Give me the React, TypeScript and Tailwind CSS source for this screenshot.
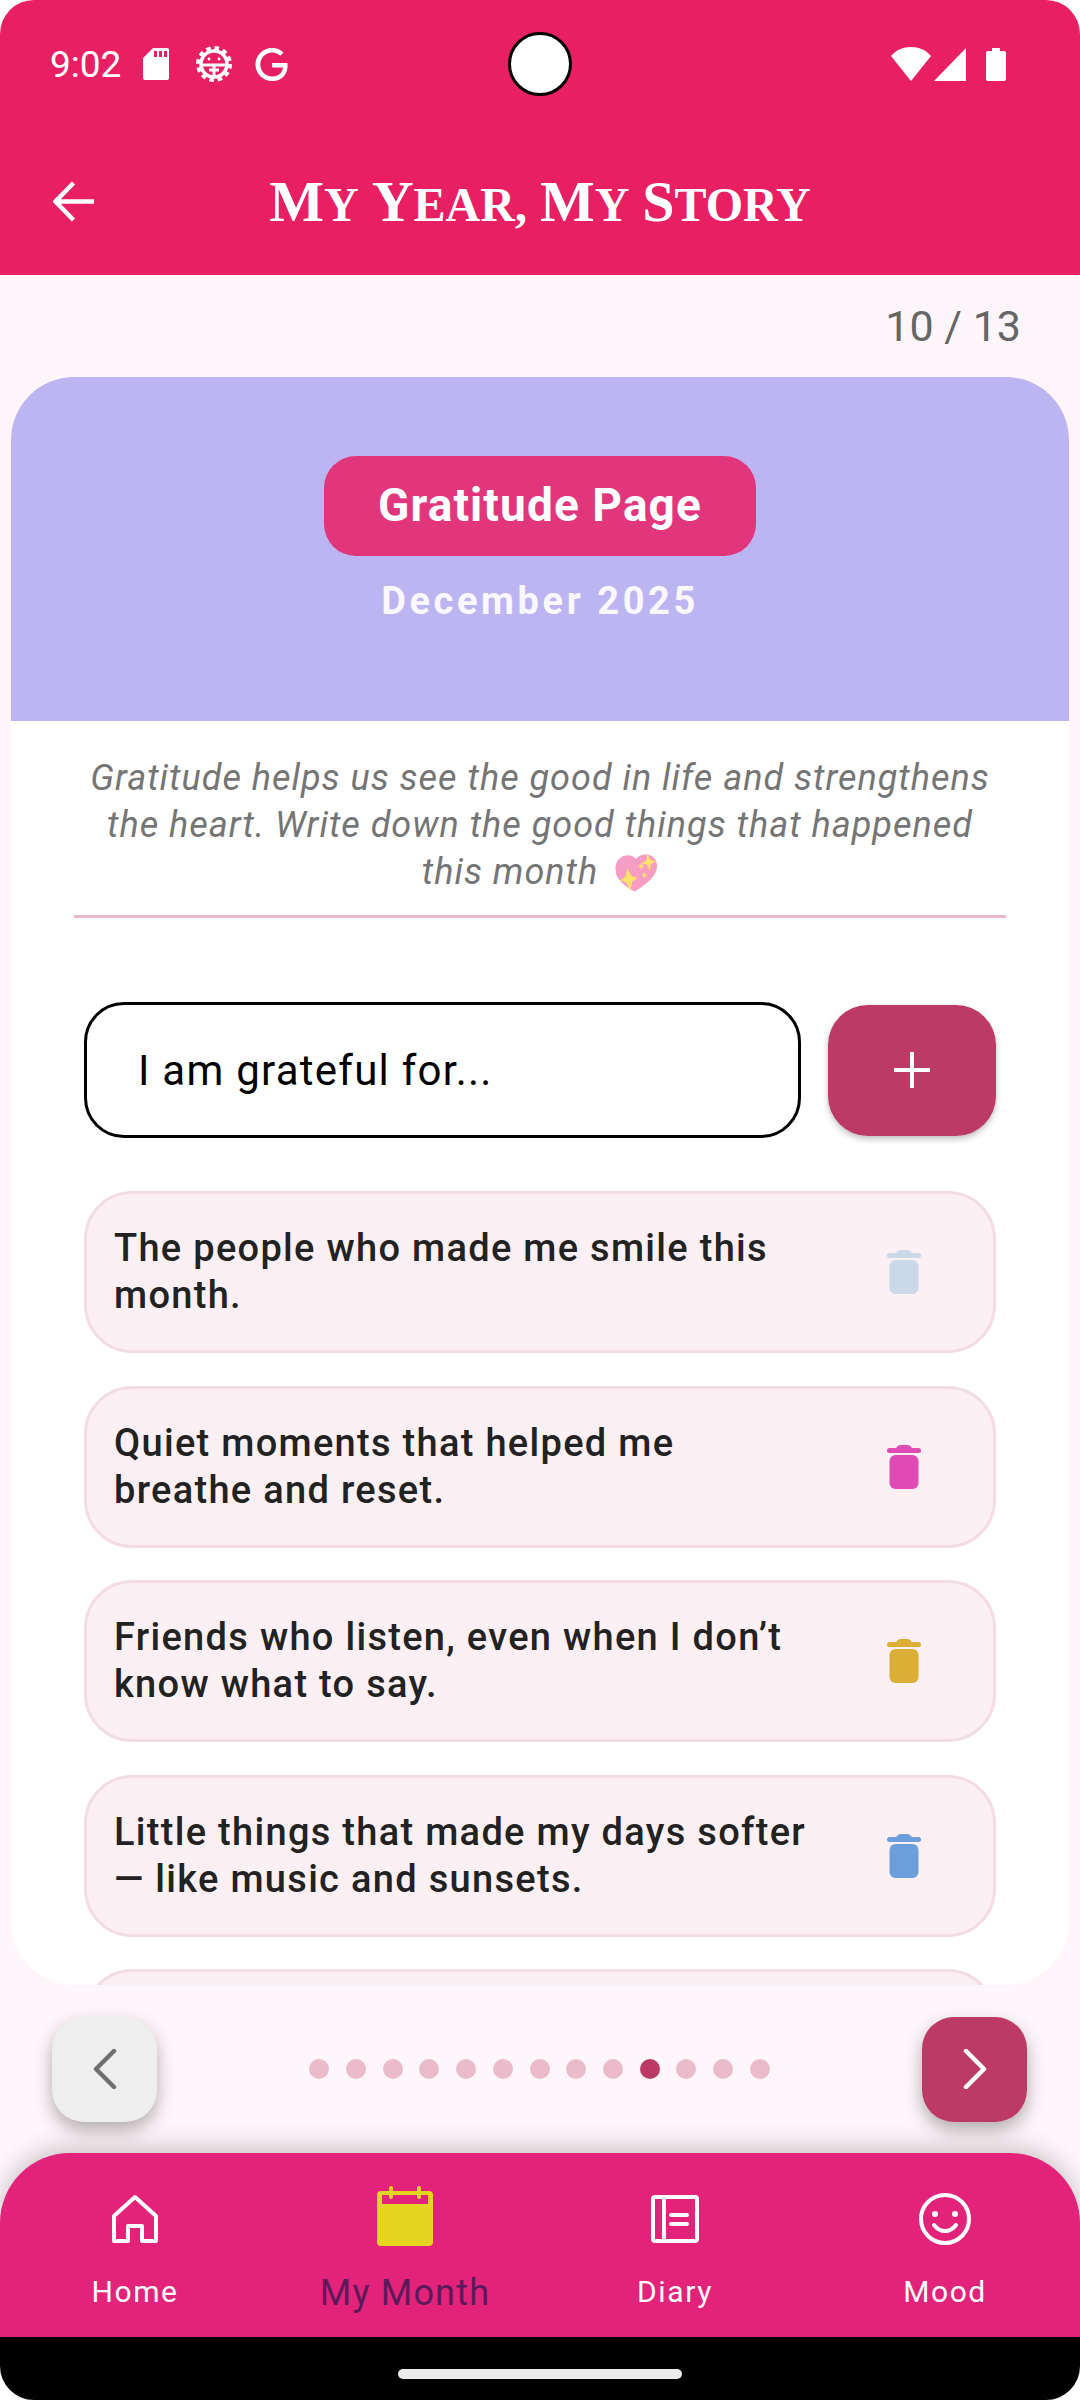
import { SiGoogle } from "react-icons/si";

const PAGE_COUNT = 13;
const ACTIVE_PAGE = 9;

const ITEMS = [
  { text: "The people who made me smile this month.", color: "#CBD8E8" },
  { text: "Quiet moments that helped me breathe and reset.", color: "#E04AB5" },
  { text: "Friends who listen, even when I don’t know what to say.", color: "#DBAE36" },
  { text: "Little things that made my days softer — like music and sunsets.", color: "#6A9FDC" },
];

const TrashIcon = ({ color }: { color: string }) => (
  <svg width="34" height="44" viewBox="0 0 34 44" fill={color}>
    <path d="M9 3.5C10 1.5 11.5 0 14 0h6c2.500 0 4 1.500 5 3.500z" />
    <rect x="0" y="3" width="34" height="5" rx="2.500" />
    <rect x="2.500" y="10" width="29" height="34" rx="6" />
  </svg>
);

const StatusBar = () => (
  <div className="flex h-[128px] items-center justify-between pl-[50px] pr-[74px]">
    <div className="flex items-center">
      <span className="w-[93px] text-[37px] leading-none text-white">9:02</span>
      <svg width="26" height="32" viewBox="0 0 26 32" fill="white">
        <path fillRule="evenodd" d="M10 0h14a2 2 0 0 1 2 2v28a2 2 0 0 1-2 2H2a2 2 0 0 1-2-2V10zM11 3v6h3V3zm5 0v6h3V3zm5 0v6h3V3z" />
      </svg>
      <svg className="ml-[27px]" width="36" height="36" viewBox="0 0 36 36" fill="none" stroke="white">
        <circle cx="18" cy="18" r="16" strokeWidth="4" strokeDasharray="4.500 3.880" />
        <circle cx="18" cy="18" r="13" strokeWidth="3.500" />
        <path d="M5 19h26M18 19v12M13 24h10" strokeWidth="3" />
        <circle cx="13" cy="13" r="1.400" fill="white" stroke="none" />
        <circle cx="23" cy="13" r="1.400" fill="white" stroke="none" />
      </svg>
      <SiGoogle className="ml-[23px] text-white" size={33} />
    </div>
    <div className="flex items-center">
      <svg width="40" height="34" viewBox="0 0 40 34" fill="white">
        <path d="M20 34 0 9C5 3 12 0 20 0s15 3 20 9z" />
      </svg>
      <svg className="ml-[3px]" width="33" height="33" viewBox="0 0 33 33" fill="white">
        <path d="M32 0v33H0z" />
      </svg>
      <svg className="ml-[19px]" width="20" height="33" viewBox="0 0 20 33" fill="white">
        <path d="M6 0h8v3h4a2 2 0 0 1 2 2v26a2 2 0 0 1-2 2H2a2 2 0 0 1-2-2V5a2 2 0 0 1 2-2h4z" />
      </svg>
    </div>
  </div>
);

const TitleWord = ({ word }: { word: string }) => (
  <span>
    {word[0]}
    <span className="text-[48px] uppercase">{word.slice(1)}</span>
  </span>
);

const AppBar = () => (
  <div className="relative flex h-[147px] items-center justify-center">
    <svg className="absolute left-[53px] top-[53px]" width="41" height="41" viewBox="0 0 41 41" fill="none" stroke="white" strokeWidth="4.500">
      <path d="M41 20.500H4M20.500 2 2.500 20.500 20.500 39" />
    </svg>
    <h1 className="flex gap-[13px] font-['Liberation_Serif',serif] text-[58px] font-bold leading-none text-white">
      <TitleWord word="My" />
      <TitleWord word="Year," />
      <TitleWord word="My" />
      <TitleWord word="Story" />
    </h1>
  </div>
);

const SparkleHeart = () => (
  <svg className="ml-[18px] inline-block rotate-[-8deg] align-[-8px]" width="42" height="38" viewBox="0 0 42 38">
    <path d="M16 37C8 31 0 24 0 14 0 6 6 0 12 0c5 0 8 2 10 5 3-3 7-4 11-3 6 1 9 6 9 11 0 11-14 19-26 24z" fill="#F79CC3" />
    <path d="M34 1l2 7 6 2-6 2-2 7-2-7-6-2 6-2zM12 13l3 8 6 3-6 3-3 9-3-9-6-3 6-3z" fill="#FBE36B" />
    <circle cx="26" cy="13" r="2" fill="#FBE36B" />
    <circle cx="28" cy="22" r="2" fill="#FBE36B" />
  </svg>
);

const HomeIcon = () => (
  <svg width="48" height="50" viewBox="0 0 48 50" fill="none" stroke="white" strokeWidth="4" strokeLinejoin="round">
    <path d="M3 47V22L24 3l21 19v25H31V32H17v15z" />
  </svg>
);

const CalendarIcon = () => (
  <svg width="56" height="60" viewBox="0 0 56 60">
    <path fillRule="evenodd" fill="#E3D520" d="M4 5h48a4 4 0 0 1 4 4v47a4 4 0 0 1-4 4H4a4 4 0 0 1-4-4V9a4 4 0 0 1 4-4zm1 4v9h46V9z" />
    <rect x="12" y="0" width="4" height="13" rx="2" fill="#E3D520" />
    <rect x="40" y="0" width="4" height="13" rx="2" fill="#E3D520" />
  </svg>
);

const DiaryIcon = () => (
  <svg width="48" height="48" viewBox="0 0 48 48" fill="none" stroke="white" strokeWidth="4" strokeLinecap="round" strokeLinejoin="round">
    <rect x="2" y="2" width="44" height="44" rx="2" />
    <path d="M13 2v44" strokeLinecap="butt" />
    <path d="M20 20h16M20 29h16" />
  </svg>
);

const MoodIcon = () => (
  <svg width="52" height="52" viewBox="0 0 52 52" fill="none" stroke="white" strokeWidth="4" strokeLinecap="round">
    <circle cx="26" cy="26" r="24" />
    <circle cx="16" cy="21" r="3" fill="white" stroke="none" />
    <circle cx="36" cy="21" r="3" fill="white" stroke="none" />
    <path d="M15 32c3 4 7 6 11 6s8-2 11-6" />
  </svg>
);

const NAV_ITEMS = [
  { label: "Home", icon: <HomeIcon /> },
  { label: "My Month", icon: <CalendarIcon />, active: true },
  { label: "Diary", icon: <DiaryIcon /> },
  { label: "Mood", icon: <MoodIcon /> },
];

export default function App() {
  return (
    <div className="relative flex h-[2400px] w-[1080px] flex-col overflow-hidden rounded-[34px] bg-[#FEF6FA] font-['Roboto',sans-serif]">
      <div className="absolute left-[508px] top-[32px] h-[64px] w-[64px] rounded-full border-[3px] border-black bg-white" />

      <header className="h-[275px] shrink-0 bg-[#E91F63]">
        <StatusBar />
        <AppBar />
      </header>

      <div className="flex h-[102px] shrink-0 items-center justify-end pr-[59px] text-[43px] text-[#666666]">
        10 / 13
      </div>

      <main className="mx-[11px] h-[1608px] shrink-0 overflow-hidden rounded-[63px] bg-white">
        <section className="flex h-[344px] flex-col items-center bg-[#BDB5F2] pt-[79px]">
          <div className="flex h-[100px] w-[432px] items-center justify-center rounded-[32px] bg-[#E2367C] pb-[2px] text-[46px] font-bold tracking-[1.1px] text-white">
            Gratitude Page
          </div>
          <p className="mt-[23px] text-[38px] font-bold leading-[44px] tracking-[3.6px] text-[#FBF7FE]">December 2025</p>
        </section>

        <section className="mx-[63px] border-b-[3px] border-[#EBB8C9] pt-[34px] pb-[19px] text-center text-[36px] italic leading-[47px] tracking-[1px] text-[#757575]">
          <p>
            Gratitude helps us see the good in life and strengthens the heart. Write down the good things that happened this month
            <SparkleHeart />
          </p>
        </section>

        <section className="mx-[73px] mt-[84px]">
          <div className="flex items-center gap-[27px]">
            <div className="flex h-[136px] w-[717px] items-center rounded-[40px] border-[3px] border-black bg-white pl-[51px] text-[42px] tracking-[1.25px] text-black">
              I am grateful for...
            </div>
            <button className="flex h-[131px] w-[168px] items-center justify-center rounded-[40px] bg-[#BE3A66] shadow-[0_3px_6px_rgba(0,0,0,0.25)]">
              <svg width="36" height="36" viewBox="0 0 36 36" stroke="white" strokeWidth="4">
                <path d="M18 0v36M0 18h36" />
              </svg>
            </button>
          </div>

          <ul className="mt-[53px] flex flex-col gap-[32.500px]">
            {ITEMS.map((item) => (
              <li key={item.text} className="flex h-[162px] items-center justify-between rounded-[48px] border-[3px] border-[#F3DCE5] bg-[#FCF0F4] pl-[27px] pr-[72px]">
                <p className="w-[698px] text-[38px] font-medium leading-[47px] tracking-[1.3px] text-[#222222]">{item.text}</p>
                <TrashIcon color={item.color} />
              </li>
            ))}
            <li className="h-[162px] rounded-[48px] border-[3px] border-[#F3DCE5] bg-[#FCF0F4]" />
          </ul>
        </section>
      </main>

      <div className="flex h-[168px] shrink-0 items-center justify-between pl-[52px] pr-[53px]">
        <button className="flex h-[105px] w-[105px] items-center justify-center rounded-[32px] bg-[#EEEEEE] shadow-[0_8px_18px_rgba(0,0,0,0.3)]">
          <svg width="24" height="40" viewBox="0 0 24 40" fill="none" stroke="#707070" strokeWidth="4.500" strokeLinecap="round" strokeLinejoin="round">
            <path d="M21 2 3 20l18 18" />
          </svg>
        </button>
        <div className="flex gap-[16.700px]">
          {Array.from({ length: PAGE_COUNT }, (_, i) => (
            <span key={i} className={i === ACTIVE_PAGE ? "h-[20px] w-[20px] rounded-full bg-[#BE3A66]" : "h-[20px] w-[20px] rounded-full bg-[#EBBBCC]"} />
          ))}
        </div>
        <button className="flex h-[105px] w-[105px] items-center justify-center rounded-[32px] bg-[#BE3A66] shadow-[0_8px_18px_rgba(0,0,0,0.3)]">
          <svg width="24" height="40" viewBox="0 0 24 40" fill="none" stroke="white" strokeWidth="4.500" strokeLinecap="round" strokeLinejoin="round">
            <path d="M3 2l18 18L3 38" />
          </svg>
        </button>
      </div>

      <nav className="grid h-[184px] shrink-0 grid-cols-4 rounded-t-[70px] bg-[#E3227A] shadow-[0_-6px_24px_rgba(0,0,0,0.2)]">
        {NAV_ITEMS.map((item) => (
          <div key={item.label} className="flex flex-col items-center pt-[33px]">
            <div className={item.active ? "flex h-[60px] items-center justify-center" : "flex h-[60px] items-center justify-center pt-[6px]"}>{item.icon}</div>
            <span className={item.active ? "mt-[28px] text-[36px] leading-[38px] tracking-[1.2px] text-[#5A1A5A]" : "mt-[27px] text-[30px] leading-[38px] tracking-[1.6px] text-white"}>
              {item.label}
            </span>
          </div>
        ))}
      </nav>

      <div className="flex h-[63px] shrink-0 items-center justify-center bg-black pt-[10px]">
        <div className="h-[10px] w-[284px] rounded-full bg-[#ECECEC]" />
      </div>
    </div>
  );
}
